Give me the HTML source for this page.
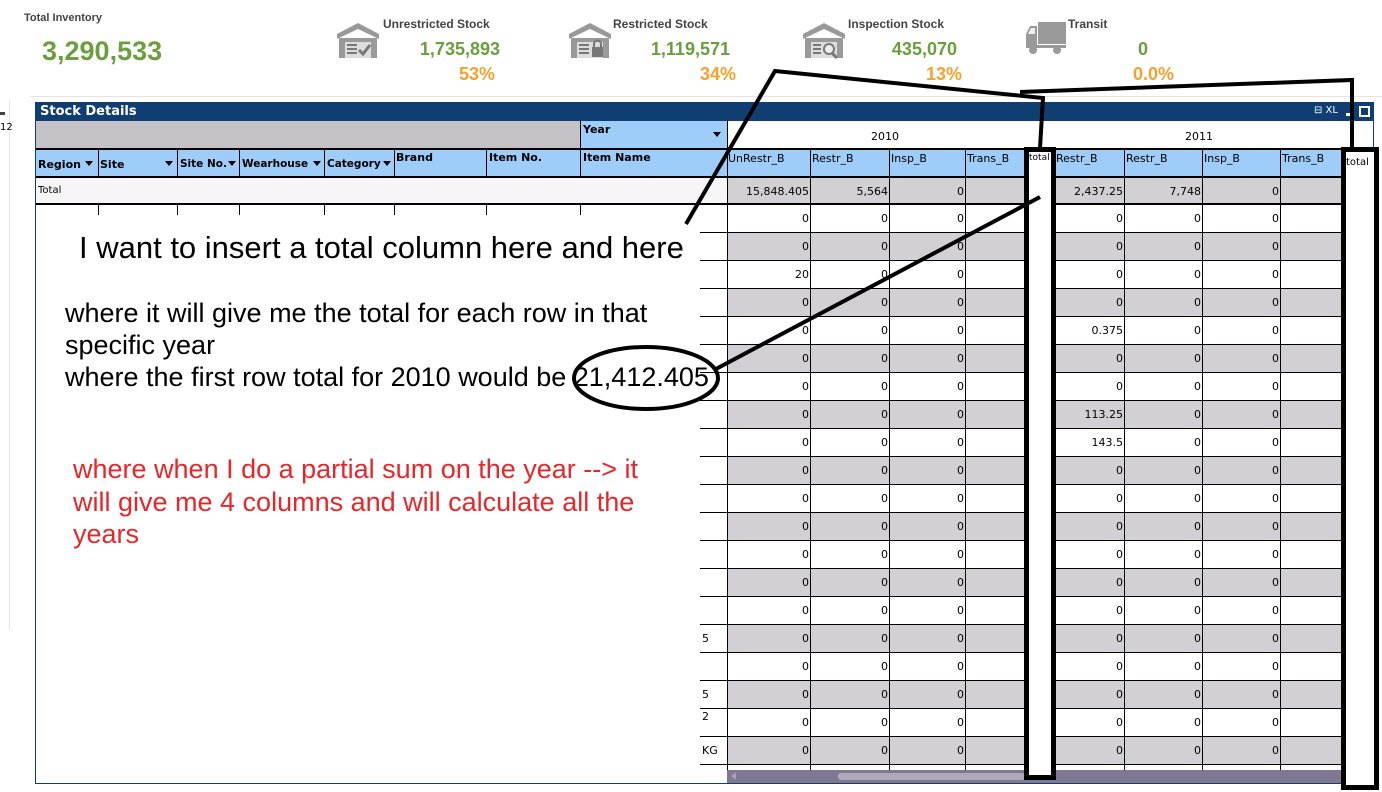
<!DOCTYPE html>
<html><head><meta charset="utf-8"><style>
*{margin:0;padding:0;box-sizing:border-box}
body{width:1382px;height:792px;background:#fff;position:relative;overflow:hidden;font-family:"Liberation Sans",Arial,sans-serif}
.a{position:absolute}
.lbl{font-size:12px;font-weight:bold;color:#444}
.val{font-size:18px;font-weight:bold;color:#6b9e3c;text-align:right}
.pct{font-size:18px;font-weight:bold;color:#f5a12e;text-align:right}
.hd{font-size:11px;font-weight:bold;color:#000;font-family:"DejaVu Sans",sans-serif}
.num{font-size:11px;text-align:right;line-height:28px;font-family:"DejaVu Sans",sans-serif;color:#000}
.vl{position:absolute;width:1px;background:#000}
.sm{font-size:11px;font-family:"DejaVu Sans",sans-serif}
</style></head><body>
<div class="a lbl" style="left:24px;top:12px;font-size:11px">Total Inventory</div>
<div class="a" style="left:42px;top:36px;font-size:27px;font-weight:bold;color:#6b9e3c">3,290,533</div>

<svg class="a" style="left:335px;top:20px" width="46" height="40" viewBox="0 0 46 40"><path d="M2 14 L23 3 L44 14 L44 19 L23 9 L2 19Z" fill="#999"/><rect x="4" y="18" width="38" height="20" fill="#9a9a9a"/><rect x="10" y="22" width="26" height="16" fill="#ddd"/><path d="M12 25h10M12 29h10M12 33h10" stroke="#777" stroke-width="2"/><path d="M24 30l4 4 7-9" stroke="#777" stroke-width="3" fill="none"/></svg>
<div class="a lbl" style="left:383px;top:17px">Unrestricted Stock</div>
<div class="a val" style="left:380px;top:39px;width:120px">1,735,893</div>
<div class="a pct" style="left:380px;top:64px;width:115px">53%</div>

<svg class="a" style="left:567px;top:20px" width="46" height="40" viewBox="0 0 46 40"><path d="M2 14 L23 3 L44 14 L44 19 L23 9 L2 19Z" fill="#999"/><rect x="4" y="18" width="38" height="20" fill="#9a9a9a"/><rect x="10" y="22" width="26" height="16" fill="#ddd"/><path d="M12 25h10M12 29h10M12 33h10" stroke="#777" stroke-width="2"/><rect x="25" y="27" width="11" height="10" fill="#777"/><path d="M27 27v-3a3.5 3.5 0 0 1 7 0v3" stroke="#777" stroke-width="2" fill="none"/></svg>
<div class="a lbl" style="left:613px;top:17px">Restricted Stock</div>
<div class="a val" style="left:610px;top:39px;width:120px">1,119,571</div>
<div class="a pct" style="left:610px;top:64px;width:126px">34%</div>

<svg class="a" style="left:801px;top:20px" width="46" height="40" viewBox="0 0 46 40"><path d="M2 14 L23 3 L44 14 L44 19 L23 9 L2 19Z" fill="#999"/><rect x="4" y="18" width="38" height="20" fill="#9a9a9a"/><rect x="10" y="22" width="26" height="16" fill="#ddd"/><path d="M12 25h8M12 29h8M12 33h8" stroke="#777" stroke-width="2"/><circle cx="28" cy="29" r="5" stroke="#777" stroke-width="2" fill="#eee"/><path d="M31 33l5 5" stroke="#777" stroke-width="3"/></svg>
<div class="a lbl" style="left:848px;top:17px">Inspection Stock</div>
<div class="a val" style="left:840px;top:39px;width:117px">435,070</div>
<div class="a pct" style="left:840px;top:64px;width:122px">13%</div>

<svg class="a" style="left:1024px;top:20px" width="44" height="36" viewBox="0 0 44 36"><rect x="14" y="2" width="28" height="22" fill="#9a9a9a"/><path d="M2 14 L6 6 L13 6 L13 26 L2 26Z" fill="#9a9a9a"/><path d="M4 14 L7 8 L11 8 L11 14Z" fill="#eee"/><rect x="2" y="25" width="40" height="3" fill="#9a9a9a"/><circle cx="9" cy="30" r="4" fill="#9a9a9a"/><circle cx="33" cy="30" r="4" fill="#9a9a9a"/></svg>
<div class="a lbl" style="left:1068px;top:17px">Transit</div>
<div class="a val" style="left:1080px;top:39px;width:68px">0</div>
<div class="a pct" style="left:1080px;top:64px;width:94px">0.0%</div>

<div class="a" style="left:30px;top:96px;width:1352px;height:1px;background:#e6e2e8"></div>
<div class="a" style="left:0;top:100px;width:10px;height:530px;border-right:1px solid #e8e4ea"></div>
<div class="a sm" style="left:0;top:122px;font-size:10px">12</div>
<div class="a" style="left:0;top:112px;width:5px;height:3px;background:#444"></div>

<div class="a" style="left:35px;top:102px;width:1339px;height:682px;border:1px solid #0f3f72;border-top:none;background:#fff"></div>
<div class="a" style="left:35px;top:102px;width:1339px;height:19px;background:#0f3f72"></div>
<div class="a" style="left:40px;top:104px;color:#fff;font-size:13px;font-weight:bold;font-family:'DejaVu Sans',sans-serif">Stock Details</div>
<div class="a" style="left:1314px;top:105px;color:#fff;font-size:10px;font-family:'DejaVu Sans',sans-serif">⊟ XL</div>
<div class="a" style="left:1346px;top:113px;width:6px;height:3px;background:#fff"></div>
<div class="a" style="left:1359px;top:106px;width:11px;height:11px;border:2px solid #fff"></div>

<div class="a" style="left:36px;top:121px;width:544px;height:27px;background:#c4c2c6"></div>
<div class="a" style="left:580px;top:121px;width:147px;height:27px;background:#9ecdfa;border-left:1px solid #000"></div>
<div class="a hd" style="left:583px;top:123px">Year</div>
<div class="a" style="left:713px;top:132px;width:0;height:0;border-left:4px solid transparent;border-right:4px solid transparent;border-top:5px solid #000"></div>
<div class="a sm" style="left:871px;top:130px">2010</div>
<div class="a sm" style="left:1185px;top:130px">2011</div>

<div class="a" style="left:36px;top:148px;width:1306px;height:30px;background:#9ecdfa;border-top:2px solid #000;border-bottom:2px solid #000"></div>
<div class="a hd" style="left:38px;top:158px">Region</div><div class="a" style="left:85px;top:161px;border-left:4px solid transparent;border-right:4px solid transparent;border-top:5px solid #000"></div>
<div class="a hd" style="left:100px;top:158px">Site</div><div class="a" style="left:165px;top:161px;border-left:4px solid transparent;border-right:4px solid transparent;border-top:5px solid #000"></div>
<div class="a hd" style="left:180px;top:158px;font-size:10.5px">Site No.</div><div class="a" style="left:228px;top:161px;border-left:4px solid transparent;border-right:4px solid transparent;border-top:5px solid #000"></div>
<div class="a hd" style="left:242px;top:158px;font-size:10.5px">Wearhouse</div><div class="a" style="left:313px;top:161px;border-left:4px solid transparent;border-right:4px solid transparent;border-top:5px solid #000"></div>
<div class="a hd" style="left:327px;top:158px;font-size:10.5px">Category</div><div class="a" style="left:383px;top:161px;border-left:4px solid transparent;border-right:4px solid transparent;border-top:5px solid #000"></div>
<div class="a hd" style="left:396px;top:151px">Brand</div>
<div class="a hd" style="left:489px;top:151px">Item No.</div>
<div class="a hd" style="left:583px;top:151px">Item Name</div>
<div class="a sm" style="left:728px;top:152px">UnRestr_B</div>
<div class="a sm" style="left:812px;top:152px">Restr_B</div>
<div class="a sm" style="left:891px;top:152px">Insp_B</div>
<div class="a sm" style="left:967px;top:152px">Trans_B</div>
<div class="a sm" style="left:1056px;top:152px">Restr_B</div>
<div class="a sm" style="left:1126px;top:152px">Restr_B</div>
<div class="a sm" style="left:1204px;top:152px">Insp_B</div>
<div class="a sm" style="left:1282px;top:152px">Trans_B</div>

<div class="a" style="left:36px;top:178px;width:691px;height:27px;background:#f8f5f8;border-bottom:2px solid #000"></div>
<div class="a" style="left:727px;top:178px;width:615px;height:27px;background:#d3d0d5;border-bottom:2px solid #000"></div>
<div class="a sm" style="left:38px;top:185px;font-size:10px">Total</div>
<div class="a num" style="left:727px;top:178px;width:82px">15,848.405</div>
<div class="a num" style="left:810px;top:178px;width:78px">5,564</div>
<div class="a num" style="left:889px;top:178px;width:75px">0</div>
<div class="a num" style="left:1055px;top:178px;width:68px">2,437.25</div>
<div class="a num" style="left:1124px;top:178px;width:77px">7,748</div>
<div class="a num" style="left:1202px;top:178px;width:77px">0</div>

<div class="a" style="left:727px;top:205px;width:615px;height:565px;background:repeating-linear-gradient(to bottom,#fff 0 27px,#000 27px 28px,#d3d0d5 28px 55px,#000 55px 56px)"></div>
<div class="a" style="left:700px;top:205px;width:27px;height:565px;background:repeating-linear-gradient(to bottom,#fff 0 27px,#000 27px 28px)"></div>
<div class="vl" style="left:727px;top:121px;height:649px"></div>
<div class="vl" style="left:810px;top:148px;height:622px"></div>
<div class="vl" style="left:889px;top:148px;height:622px"></div>
<div class="vl" style="left:965px;top:148px;height:622px"></div>
<div class="vl" style="left:1055px;top:148px;height:622px"></div>
<div class="vl" style="left:1124px;top:148px;height:622px"></div>
<div class="vl" style="left:1202px;top:148px;height:622px"></div>
<div class="vl" style="left:1280px;top:148px;height:622px"></div>
<div class="vl" style="left:98px;top:148px;height:30px"></div><div class="vl" style="left:98px;top:205px;height:10px"></div>
<div class="vl" style="left:177px;top:148px;height:30px"></div><div class="vl" style="left:177px;top:205px;height:10px"></div>
<div class="vl" style="left:239px;top:148px;height:30px"></div><div class="vl" style="left:239px;top:205px;height:10px"></div>
<div class="vl" style="left:324px;top:148px;height:30px"></div><div class="vl" style="left:324px;top:205px;height:10px"></div>
<div class="vl" style="left:394px;top:148px;height:30px"></div><div class="vl" style="left:394px;top:205px;height:10px"></div>
<div class="vl" style="left:486px;top:148px;height:30px"></div><div class="vl" style="left:486px;top:205px;height:10px"></div>
<div class="vl" style="left:580px;top:148px;height:30px"></div><div class="vl" style="left:580px;top:205px;height:10px"></div>
<div class="a" style="left:727px;top:205px;width:615px;height:565px;overflow:hidden">
<div class="a num" style="left:0;top:0;width:82px">0<br>0<br>20<br>0<br>0<br>0<br>0<br>0<br>0<br>0<br>0<br>0<br>0<br>0<br>0<br>0<br>0<br>0<br>0<br>0<br>0</div>
<div class="a num" style="left:83px;top:0;width:78px">0<br>0<br>0<br>0<br>0<br>0<br>0<br>0<br>0<br>0<br>0<br>0<br>0<br>0<br>0<br>0<br>0<br>0<br>0<br>0<br>0</div>
<div class="a num" style="left:162px;top:0;width:75px">0<br>0<br>0<br>0<br>0<br>0<br>0<br>0<br>0<br>0<br>0<br>0<br>0<br>0<br>0<br>0<br>0<br>0<br>0<br>0<br>0</div>
<div class="a num" style="left:328px;top:0;width:68px">0<br>0<br>0<br>0<br>0.375<br>0<br>0<br>113.25<br>143.5<br>0<br>0<br>0<br>0<br>0<br>0<br>0<br>0<br>0<br>0<br>0<br>0</div>
<div class="a num" style="left:397px;top:0;width:77px">0<br>0<br>0<br>0<br>0<br>0<br>0<br>0<br>0<br>0<br>0<br>0<br>0<br>0<br>0<br>0<br>0<br>0<br>0<br>0<br>0</div>
<div class="a num" style="left:475px;top:0;width:77px">0<br>0<br>0<br>0<br>0<br>0<br>0<br>0<br>0<br>0<br>0<br>0<br>0<br>0<br>0<br>0<br>0<br>0<br>0<br>0<br>0</div>
</div>
<div class="a sm" style="left:702px;top:744px;font-size:11px">KG</div>
<div class="a sm" style="left:702px;top:688px;font-size:11px">5</div>
<div class="a sm" style="left:702px;top:632px;font-size:11px">5</div>
<div class="a sm" style="left:702px;top:710px;font-size:11px">2</div>

<div class="a" style="left:727px;top:770px;width:615px;height:13px;background:#807890"></div>
<div class="a" style="left:838px;top:773px;width:187px;height:7px;background:#b0aab8;border-radius:3px"></div>
<div class="a" style="left:731px;top:772px;border-top:4px solid transparent;border-bottom:4px solid transparent;border-right:5px solid #a8a2b4"></div>

<div class="a" style="left:79px;top:230px;font-size:31px;line-height:36px;color:#000;white-space:nowrap">I want to insert a total column here and here</div>
<div class="a" style="left:65px;top:297px;font-size:27px;line-height:32px;color:#000;white-space:nowrap">where it will give me the total for each row in that<br>specific year<br>where the first row total for 2010 would be 21,412.405</div>
<div class="a" style="left:73px;top:453px;font-size:27px;line-height:32.5px;color:#e8262a;white-space:nowrap">where when I do a partial sum on the year --&gt; it<br>will give me 4 columns and will calculate all the<br>years</div>

<div class="a" style="left:1024px;top:147px;width:32px;height:633px;border:5px solid #000;background:#fff"></div>
<div class="a sm" style="left:1029px;top:153px;font-size:9px">total</div>
<div class="a" style="left:1341px;top:147px;width:38px;height:643px;border:5px solid #000;background:#fff"></div>
<div class="a sm" style="left:1346px;top:157px;font-size:10px">total</div>

<svg class="a" style="left:0;top:0" width="1382" height="792">
<g stroke="#000" stroke-width="4" fill="none">
<path d="M686 224 L775 71 L1043 98 L1040 148"/>
<path d="M1020 92 L1352 80 L1352 148"/>
<path d="M714 370 L1040 197"/>
<ellipse cx="646" cy="378" rx="72" ry="31"/>
</g>
</svg>
</body></html>
